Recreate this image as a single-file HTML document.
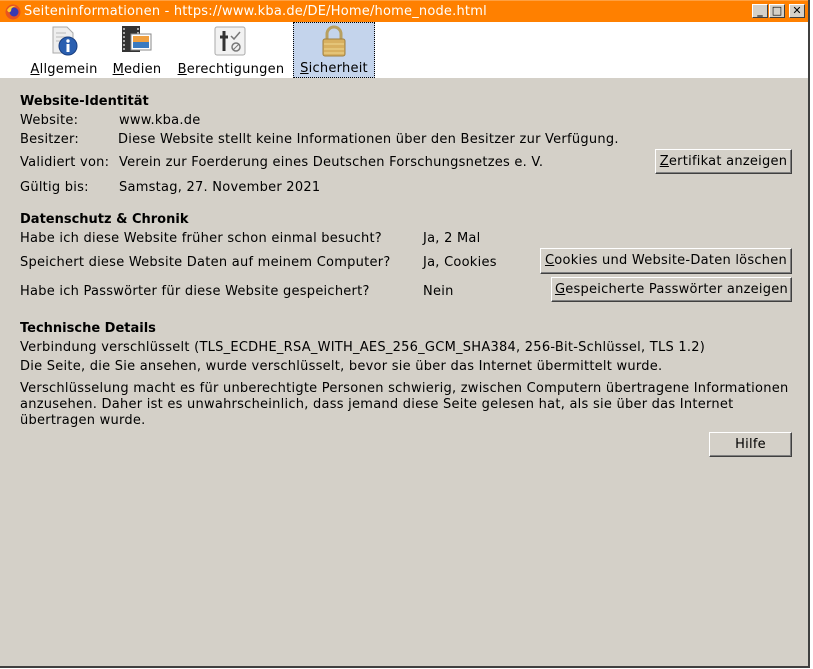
<!DOCTYPE html>
<html><head><meta charset="utf-8"><style>
*{margin:0;padding:0;box-sizing:border-box}
body{width:813px;height:669px;background:#fff;font-family:"DejaVu Sans",Verdana,sans-serif;font-size:13px;letter-spacing:0.25px;color:#000;position:relative;overflow:hidden}
#win{position:absolute;left:0;top:0;width:810px;height:668px;background:#d4d0c8;border-right:2px solid #404040;border-bottom:2px solid #404040}
#title{position:absolute;left:0;top:0;width:808px;height:22px;background:#ff8000;color:#fff;font-size:13px;letter-spacing:0.2px;line-height:22px;padding-left:24px;border-top:1px solid #ffa040}
#tb{position:absolute;left:0;top:22px;width:808px;height:56px;background:#fff}
.t{position:absolute;white-space:nowrap}
.b{font-weight:bold;letter-spacing:0}
.btn{position:absolute;background:#d4d0c8;border:1px solid;border-color:#fff #404040 #404040 #fff;box-shadow:inset -1px -1px 0 #808080;text-align:center;line-height:24px;white-space:nowrap}
.wb{position:absolute;top:3px;width:16px;height:14px;background:#d4d0c8;border:1px solid;border-color:#fff #404040 #404040 #fff;font-size:11px;font-weight:bold;line-height:12px;text-align:center;color:#000;letter-spacing:0}
.tab{position:absolute;top:0;height:56px;text-align:center}
.tab span{position:absolute;bottom:1px;left:0;right:0}
u{text-decoration:underline}
</style></head><body>
<div id="win">
<div id="title">Seiteninformationen - https://www.kba.de/DE/Home/home_node.html
<svg style="position:absolute;left:5px;top:3px" width="16" height="16"><circle cx="8" cy="8" r="7.5" fill="#e8531f"/><circle cx="9" cy="8" r="4.5" fill="#3a3ab0"/><path d="M2 6 Q5 1 11 2 Q6 3 6 7 Q4 10 2 6Z" fill="#ffcc30"/></svg>
<div class="wb" style="left:752px">_</div><div class="wb" style="left:769px">□</div><div class="wb" style="left:789px">✕</div>
</div>
<div id="tb">
<div class="tab" style="left:30px;width:68px">
<svg style="position:absolute;left:19px;top:3px" width="30" height="32"><path d="M4 2h14l6 6v20H4z" fill="#eee" stroke="#aaa"/><path d="M7 8h10M7 12h12M7 16h8" stroke="#bbb"/><circle cx="19" cy="21" r="9" fill="#2a5fb0" stroke="#1a3f80"/><rect x="17.5" y="19" width="3" height="8" fill="#fff"/><circle cx="19" cy="16" r="1.7" fill="#fff"/></svg>
<span><u>A</u>llgemein</span></div>
<div class="tab" style="left:110px;width:54px">
<svg style="position:absolute;left:10px;top:2px" width="34" height="32"><rect x="2" y="2" width="18" height="26" fill="#333"/><path d="M4 4v22M18 4v22" stroke="#aaa" stroke-dasharray="2 2" stroke-width="2"/><rect x="11" y="10" width="20" height="16" fill="#fff" stroke="#888"/><rect x="13" y="12" width="16" height="12" fill="#f0a040"/><rect x="13" y="18" width="16" height="6" fill="#3a7ac0"/></svg>
<span><u>M</u>edien</span></div>
<div class="tab" style="left:176px;width:110px">
<svg style="position:absolute;left:38px;top:4px" width="32" height="30"><rect x="1" y="1" width="30" height="28" rx="2" fill="#f2f2f2" stroke="#aaa"/><path d="M10 5v20M6 11h8" stroke="#333" stroke-width="3"/><path d="M17 10l3 3 6-7" stroke="#777" fill="none" stroke-width="1.5"/><circle cx="22" cy="21" r="4" fill="none" stroke="#777" stroke-width="1.5"/><path d="M19 24l6-6" stroke="#777"/></svg>
<span><u>B</u>erechtigungen</span></div>
<div class="tab" style="left:293px;width:82px;background:#c4d4ec;border:1px dotted #000">
<svg style="position:absolute;left:25px;top:2px" width="30" height="32"><path d="M8 14V9a7 7 0 0 1 14 0v5" fill="none" stroke="#b8a060" stroke-width="3"/><rect x="4" y="14" width="22" height="17" rx="2" fill="#d8b060" stroke="#a08040"/><path d="M5 19h20M5 24h20M5 28h20" stroke="#f0d890"/></svg>
<span><u>S</u>icherheit</span></div>
</div>

<div class="t b" style="left:20px;top:94px">Website-Identität</div>
<div class="t" style="left:20px;top:113px">Website:</div><div class="t" style="left:119px;top:113px">www.kba.de</div>
<div class="t" style="left:20px;top:132px">Besitzer:</div><div class="t" style="left:118px;top:132px">Diese Website stellt keine Informationen über den Besitzer zur Verfügung.</div>
<div class="t" style="left:20px;top:155px">Validiert von:</div><div class="t" style="left:119px;top:155px">Verein zur Foerderung eines Deutschen Forschungsnetzes e. V.</div>
<div class="btn" style="left:655px;top:149px;width:137px;height:25px"><u>Z</u>ertifikat anzeigen</div>
<div class="t" style="left:20px;top:180px">Gültig bis:</div><div class="t" style="left:119px;top:180px">Samstag, 27. November 2021</div>

<div class="t b" style="left:20px;top:212px">Datenschutz &amp; Chronik</div>
<div class="t" style="left:20px;top:231px">Habe ich diese Website früher schon einmal besucht?</div><div class="t" style="left:423px;top:231px">Ja, 2 Mal</div>
<div class="t" style="left:20px;top:255px">Speichert diese Website Daten auf meinem Computer?</div><div class="t" style="left:423px;top:255px">Ja, Cookies</div>
<div class="btn" style="left:540px;top:248px;width:252px;height:26px"><u>C</u>ookies und Website-Daten löschen</div>
<div class="t" style="left:20px;top:284px">Habe ich Passwörter für diese Website gespeichert?</div><div class="t" style="left:423px;top:284px">Nein</div>
<div class="btn" style="left:551px;top:277px;width:241px;height:25px"><u>G</u>espeicherte Passwörter anzeigen</div>

<div class="t b" style="left:20px;top:321px">Technische Details</div>
<div class="t" style="left:20px;top:340px">Verbindung verschlüsselt (TLS_ECDHE_RSA_WITH_AES_256_GCM_SHA384, 256-Bit-Schlüssel, TLS 1.2)</div>
<div class="t" style="left:20px;top:359px">Die Seite, die Sie ansehen, wurde verschlüsselt, bevor sie über das Internet übermittelt wurde.</div>
<div class="t" style="left:20px;top:381px;line-height:16px;white-space:normal;width:775px">Verschlüsselung macht es für unberechtigte Personen schwierig, zwischen Computern übertragene Informationen anzusehen. Daher ist es unwahrscheinlich, dass jemand diese Seite gelesen hat, als sie über das Internet<br>übertragen wurde.</div>
<div class="btn" style="left:709px;top:432px;width:83px;height:25px">Hilfe</div>
</div>
</body></html>
